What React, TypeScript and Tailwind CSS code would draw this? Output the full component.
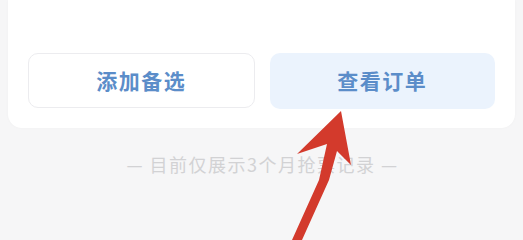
import React from "react";

export default function App() {
  const font = { fontFamily: '"Noto Sans CJK SC", "Noto Sans", sans-serif' };
  return (
    <div className="relative w-[523px] h-[240px] overflow-hidden bg-[#f6f6f7]" style={font}>
      <div className="mx-[8px] h-[128px] bg-white rounded-b-[14px] shadow-[0_0_3px_rgba(0,0,0,0.03)] flex gap-[15px] px-[20px] pt-[53px]">
        <button className="w-[229px] h-[55px] rounded-[10px] border border-[#ececef] bg-white flex items-center justify-center text-[21px] font-bold text-[#5b8dc9] tracking-[1.5px]">
          添加备选
        </button>
        <button className="w-[228px] h-[56px] rounded-[10px] bg-[#ebf3fd] flex items-center justify-center text-[21px] font-bold text-[#5b8dc9] tracking-[1.5px]">
          查看订单
        </button>
      </div>
      <div className="flex justify-center pt-[23px] pl-[2px] text-[18px] text-[#d2d2d4] tracking-[1.5px]">
        <span>— 目前仅展示3个月抢票记录 —</span>
      </div>
      <svg className="absolute left-0 top-0" width="523" height="240" viewBox="0 0 523 240">
        <path
          d="M341 111 L351 165 L337 151 L329 180 L302 240 L292 240 L319 180 L327 144 L297 154 Z"
          fill="#d33a2c"
        />
      </svg>
    </div>
  );
}
